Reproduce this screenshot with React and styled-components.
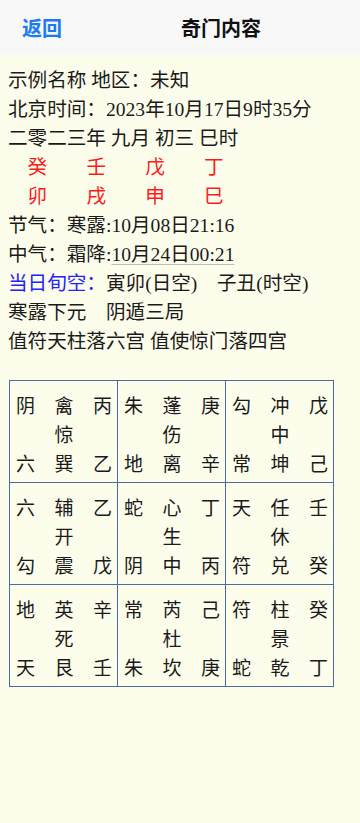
import styled, { createGlobalStyle } from "styled-components";

const GlobalStyle = createGlobalStyle`
  html, body {
    margin: 0;
    padding: 0;
    background: #fdfdec;
  }
  body {
    font-family: "Liberation Serif", "Noto Sans CJK SC", serif;
  }
`;

const Page = styled.div`
  width: 360px;
  min-height: 823px;
  background: #fdfdec;
`;

const Header = styled.header`
  height: 55px;
  display: flex;
  align-items: center;
  background: #f8f8f8;
  font-family: "Noto Sans CJK SC", sans-serif;
`;

const BackButton = styled.span`
  padding: 0 22px;
  font-size: 20px;
  font-weight: 700;
  color: #1a7cf2;
`;

const Title = styled.h1`
  flex: 1;
  margin: 0;
  padding-right: 2px;
  text-align: center;
  font-size: 20px;
  font-weight: 700;
  color: #111;
`;

const Info = styled.div`
  padding: 11px 8px 0;
  font-size: 19.6px;
  line-height: 29px;
  color: #1a1a1a;
`;

const Line = styled.div`
  height: 29px;
  white-space: nowrap;
`;

const GanZhi = styled.div`
  height: 29px;
  display: flex;
  gap: 2em;
  padding-left: 1em;
  color: #ff1a1a;
`;

const Label = styled.span`
  color: ${(props) => props.color || "inherit"};
`;

const Dated = styled.span`
  text-decoration: underline;
  text-decoration-color: #bdbdbd;
  text-underline-offset: 3px;
`;

const Grid = styled.div`
  margin: 24px 0 0 9px;
  width: 324px;
  display: grid;
  grid-template-columns: repeat(3, 1fr);
  border: 1px solid #4a6aa0;
  border-right: none;
  border-bottom: none;
`;

const Palace = styled.div`
  height: 102px;
  padding: 9px 5px 0 6px;
  box-sizing: border-box;
  border-right: 1px solid #4a6aa0;
  border-bottom: 1px solid #4a6aa0;
  display: grid;
  grid-template-columns: 1em 1em 1em;
  grid-template-rows: repeat(3, 29px);
  justify-content: space-between;
  font-family: "Noto Sans CJK SC", sans-serif;
  font-size: 19px;
  line-height: 29px;
  color: #1a1a1a;
`;

const palaces = [
  ["阴", "禽", "丙", "", "惊", "", "六", "巽", "乙"],
  ["朱", "蓬", "庚", "", "伤", "", "地", "离", "辛"],
  ["勾", "冲", "戊", "", "中", "", "常", "坤", "己"],
  ["六", "辅", "乙", "", "开", "", "勾", "震", "戊"],
  ["蛇", "心", "丁", "", "生", "", "阴", "中", "丙"],
  ["天", "任", "壬", "", "休", "", "符", "兑", "癸"],
  ["地", "英", "辛", "", "死", "", "天", "艮", "壬"],
  ["常", "芮", "己", "", "杜", "", "朱", "坎", "庚"],
  ["符", "柱", "癸", "", "景", "", "蛇", "乾", "丁"],
];

const stems = ["癸", "壬", "戊", "丁"];
const branches = ["卯", "戌", "申", "巳"];

export default function App() {
  return (
    <Page>
      <GlobalStyle />
      <Header>
        <BackButton>返回</BackButton>
        <Title>奇门内容</Title>
      </Header>

      <Info>
        <Line>示例名称 地区：未知</Line>
        <Line>北京时间：2023年10月17日9时35分</Line>
        <Line>二零二三年 九月 初三 巳时</Line>
        <GanZhi>
          {stems.map((s, i) => (
            <span key={i}>{s}</span>
          ))}
        </GanZhi>
        <GanZhi>
          {branches.map((b, i) => (
            <span key={i}>{b}</span>
          ))}
        </GanZhi>
        <Line>节气：寒露:10月08日21:16</Line>
        <Line>
          中气：霜降:<Dated>10月24日00:21</Dated>
        </Line>
        <Line>
          <Label color="#2222ff">当日旬空：</Label>寅卯(日空)&nbsp;&nbsp;&nbsp;&nbsp;子丑(时空)
        </Line>
        <Line>寒露下元&nbsp;&nbsp;&nbsp;&nbsp;阴遁三局</Line>
        <Line>值符天柱落六宫 值使惊门落四宫</Line>
      </Info>

      <Grid>
        {palaces.map((cells, i) => (
          <Palace key={i}>
            {cells.map((c, j) => (
              <span key={j}>{c}</span>
            ))}
          </Palace>
        ))}
      </Grid>
    </Page>
  );
}
